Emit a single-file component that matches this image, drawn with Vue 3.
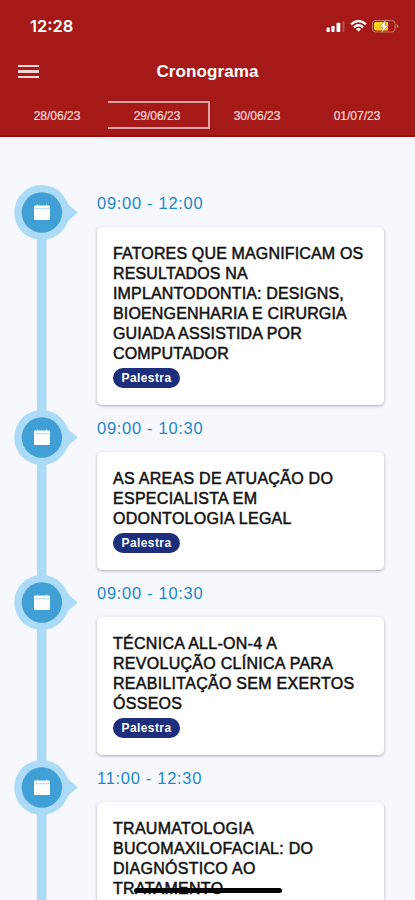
<script setup>
const days = ['28/06/23', '29/06/23', '30/06/23', '01/07/23']
const active = '29/06/23'
const talks = [
  { time: '09:00 - 12:00', tag: 'Palestra', lines: ['FATORES QUE MAGNIFICAM OS', 'RESULTADOS NA', 'IMPLANTODONTIA: DESIGNS,', 'BIOENGENHARIA E CIRURGIA', 'GUIADA ASSISTIDA POR', 'COMPUTADOR'] },
  { time: '09:00 - 10:30', tag: 'Palestra', lines: ['AS AREAS DE ATUAÇÃO DO', 'ESPECIALISTA EM', 'ODONTOLOGIA LEGAL'] },
  { time: '09:00 - 10:30', tag: 'Palestra', lines: ['TÉCNICA ALL-ON-4 A', 'REVOLUÇÃO CLÍNICA PARA', 'REABILITAÇÃO SEM EXERTOS', 'ÓSSEOS'] },
  { time: '11:00 - 12:30', tag: '', lines: ['TRAUMATOLOGIA', 'BUCOMAXILOFACIAL: DO', 'DIAGNÓSTICO AO', 'TRATAMENTO'] }
]
</script>

<template>
  <div class="screen">
    <header class="header">
      <div class="status">
        <span class="clock">12:28</span>
        <svg class="indicators" width="74" height="16" viewBox="0 0 74 16">
          <g fill="#fff">
            <rect x="0.500" y="9.500" width="3.300" height="4.500" rx="1" />
            <rect x="5.300" y="8" width="3.300" height="6" rx="1" />
            <rect x="10.500" y="4.800" width="3.800" height="9.200" rx="1" />
            <rect x="16.500" y="3" width="2" height="11" rx="1" opacity=".25" />
          </g>
          <g fill="none" stroke="#fff" stroke-width="2.300">
            <path d="M25 6.300Q32.500 -.4 40 6.300" />
            <path d="M28 9.300Q32.500 5.300 37 9.300" />
          </g>
          <path d="M32.500 13.700L29.900 11.100Q32.500 9.100 35.100 11.100Z" fill="#fff" />
          <rect x="46.500" y="2.500" width="22.500" height="11.500" rx="3.200" fill="none" stroke="#c97968" />
          <path d="M50 4H62V12.500H50Q48 12.500 48 10.500V6Q48 4 50 4Z" fill="#f7d21c" />
          <path d="M70.500 6V10.500Q72.500 9.500 72.500 8.200Q72.500 7 70.500 6Z" fill="#c97968" />
          <path d="M59.800 1.800L53.500 8.900H57L55.500 14.700L62.500 7.300H58.800Z" fill="#fff" stroke="#b55827" stroke-width=".5" />
        </svg>
      </div>
      <div class="titlebar">
        <div class="menu"><i></i><i></i><i></i></div>
        <h1>Cronograma</h1>
      </div>
      <nav class="days">
        <span v-for="d in days" :key="d" class="day" :class="{ active: d === active }">{{ d }}</span>
      </nav>
    </header>
    <main class="timeline">
      <section v-for="(t, i) in talks" :key="i" class="item">
        <div class="rail">
          <svg class="marker" width="65" height="55" viewBox="0 0 65 55">
            <path d="M48 11L56 21L64 27.500L56 34L48 44Z" fill="#abdbf6" />
            <circle cx="27.700" cy="27.500" r="27.500" fill="#abdbf6" />
            <circle cx="27.900" cy="27.500" r="20.200" fill="#409fd5" />
            <rect x="20" y="20.500" width="16" height="14.500" rx="1" fill="#fff" />
            <path d="M20.500 23.700H35.500" stroke="#9bcce9" stroke-width=".8" />
            <path d="M23.500 19.500V22M32.500 19.500V22" stroke="#d7ebf6" stroke-width="1" />
          </svg>
        </div>
        <div class="body">
          <div class="time">{{ t.time }}</div>
          <article class="card">
            <p v-for="l in t.lines" :key="l">{{ l }}</p>
            <span v-if="t.tag" class="tag">{{ t.tag }}</span>
          </article>
        </div>
      </section>
    </main>
    <div class="home"></div>
  </div>
</template>

<style>
body { background: #f7f8fe; }
</style>

<style scoped>
.screen { position: relative; width: 415px; height: 900px; overflow: hidden; background: #f7f8fe; font-family: "Liberation Sans", Arial, sans-serif; }
.header { box-sizing: border-box; height: 137px; background: #a51918; color: #fff; border-bottom: 2px solid #a3090e; }
.status { height: 50px; display: flex; justify-content: space-between; padding: 0 10px 0 30px; }
.clock { font: 600 16.500px/52px Inter, sans-serif; letter-spacing: 0; }
.indicators { margin-top: 17.500px; margin-right: 5px; }
.titlebar { height: 42px; display: grid; grid-template-columns: 18px 1fr 18px; align-items: center; padding: 0 18px; }
.menu { width: 21px; display: grid; gap: 3px; }
.menu i { height: 2.500px; background: #f8d5d3; }
h1 { margin: 0; text-align: center; font-size: 17px; line-height: 43px; font-weight: 700; letter-spacing: .1px; }
.days { display: grid; grid-template-columns: repeat(4, 100px); padding: 9px 0 0 7px; }
.day { box-sizing: border-box; height: 28px; text-align: center; font-size: 12px; line-height: 30px; letter-spacing: 0; color: #f9dedd; -webkit-text-stroke: .2px #f9dedd; }
.day.active { width: 102px; margin-left: 1px; padding-right: 2px; border: 2px solid #e3a5a2; border-left: 0; line-height: 26px; }
.timeline { padding: 48px 31px 0 14px; }
.item { display: grid; grid-template-columns: 65px 1fr; column-gap: 18px; }
.rail { background: linear-gradient(#abdbf6, #abdbf6) 22.500px 0 / 9.500px 100% no-repeat; }
.item:first-child .rail { background-position: 22.500px 28px; }
.marker { display: block; }
.body { padding-bottom: 5px; }
.time { height: 42px; font-size: 16.500px; line-height: 37px; letter-spacing: .7px; color: #1c87c9; }
.card { box-sizing: border-box; padding: 17px 0 17px 16px; border-radius: 5px; background: #fff; box-shadow: 0 1px 3px rgba(40, 40, 60, .38); }
.card p { margin: 0; font-size: 16px; line-height: 20px; height: 20px; white-space: nowrap; letter-spacing: .28px; color: #111; -webkit-text-stroke: .5px #111; }
.item:first-child .card p { letter-spacing: .15px; }
.tag { display: block; box-sizing: border-box; width: 67px; height: 20px; margin-top: 4px; border-radius: 10px; background: #1c2e7c; color: #fff; text-align: center; font-size: 12px; line-height: 20px; font-weight: 700; letter-spacing: .42px; }
.home { position: absolute; left: 134px; top: 888px; width: 148px; height: 5px; border-radius: 3px; background: #050505; }
</style>
